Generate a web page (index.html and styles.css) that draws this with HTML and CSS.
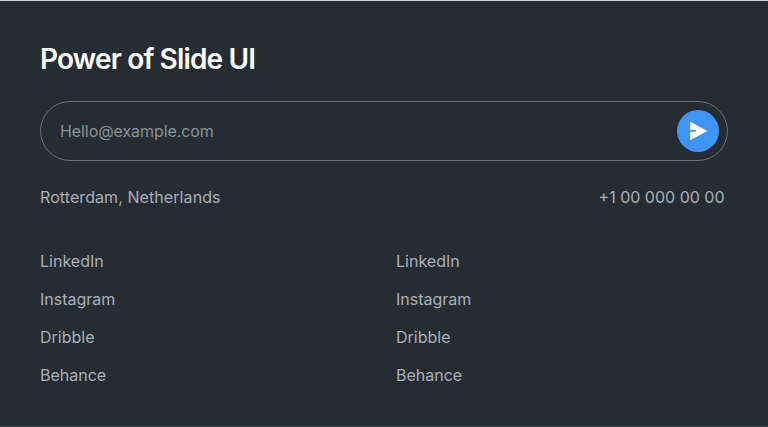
FILE: index.html
```html
<!DOCTYPE html>
<html lang="en">
<head>
<meta charset="utf-8">
<title>Power of Slide UI</title>
<link rel="stylesheet" href="styles.css">
</head>
<body>
<footer class="footer">
  <h1 class="title">Power of Slide UI</h1>
  <form class="subscribe">
    <input class="email" type="email" placeholder="Hello@example.com" aria-label="Email">
    <button class="send" type="button" aria-label="Send">
      <svg width="42" height="42" viewBox="0 0 42 42"><path d="M13.2 11.8L30.4 20.9L13.2 30.2V21.8H18.8V20.1H13.2Z" fill="#fff"/></svg>
    </button>
  </form>
  <div class="contact"><span class="place">Rotterdam, Netherlands</span><span class="phone">+1 00 000 00 00</span></div>
  <nav class="links">
    <ul class="column"><li>LinkedIn</li><li>Instagram</li><li>Dribble</li><li>Behance</li></ul>
    <ul class="column"><li>LinkedIn</li><li>Instagram</li><li>Dribble</li><li>Behance</li></ul>
  </nav>
</footer>
</body>
</html>
```
FILE: styles.css
```css
* { box-sizing: border-box; }
body { margin: 0; background: #252d33; font-family: Inter, sans-serif; }
.footer { height: 427px; padding: 40px 40px 0; border-top: 1px solid #d0dade; border-bottom: 1px solid #3c444b; color: #a9afb5; font-size: 16px; line-height: 22px; }
.title { margin: 0; color: #fff; font-size: 28px; font-weight: 600; line-height: 36px; letter-spacing: -0.85px; }
.subscribe { display: flex; align-items: center; height: 60px; margin: 24px 0 0; padding: 0 8px 0 19px; border: 1px solid #6b7278; border-radius: 30px; }
.email { flex: 1; min-width: 0; padding: 0; border: 0; outline: 0; background: transparent; color: #fff; font: inherit; letter-spacing: -0.08px; }
.email::placeholder { color: #8b9197; opacity: 1; }
.send { width: 42px; height: 42px; padding: 0; border: 0; border-radius: 50%; background: #4093f7; }
.send svg { display: block; }
.contact { display: flex; justify-content: space-between; margin-top: 25px; padding-right: 3.5px; }
.place { letter-spacing: 0.08px; }
.links { display: grid; grid-template-columns: 1fr 1fr; column-gap: 24px; margin-top: 42px; }
.column { display: grid; row-gap: 16px; margin: 0; padding: 0; list-style: none; }
```
